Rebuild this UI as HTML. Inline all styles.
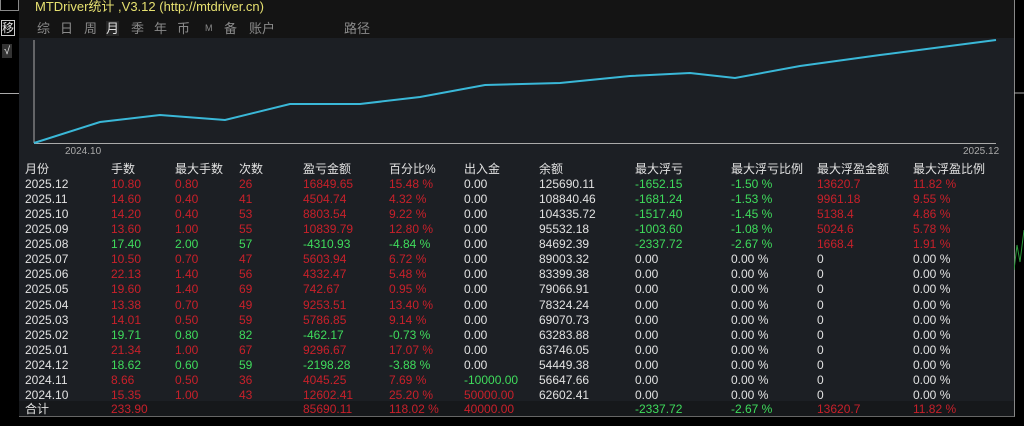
<!DOCTYPE html>
<html><head><meta charset="utf-8"><style>
body{margin:0;width:1024px;height:426px;background:#000;overflow:hidden;position:relative;font-family:"Liberation Sans","Noto Sans CJK SC",sans-serif;}
.p{position:absolute;left:19px;top:0;width:995px;height:416px;background:#1c1f24;border-right:1px solid #888;border-bottom:1px solid #666;}
.tb{position:absolute;left:0;top:0;width:995px;height:38px;background:#141414;}
.t{position:absolute;font-size:12px;white-space:nowrap;line-height:14px;}
.w{color:#e2e2e2}.r{color:#c8202a}.g{color:#3fdc5c}.y{color:#e6e070}.gr{color:#8a8a8a}
.row{position:absolute;left:0;width:995px;height:15px}
.tab{position:absolute;top:21px;font-size:13px;color:#8a8a8a;line-height:15px}
</style></head><body>
<div style="position:absolute;left:0;top:0;width:17px;height:10px;border:1px solid #888;border-top:none"></div>
<div class="t w" style="left:1px;top:20px;border:1px solid #ccc;font-size:12px;line-height:14px">移</div>
<div class="t w" style="left:2px;top:44px;background:#333;padding:0 2px;font-size:11px">√</div>
<div style="position:absolute;left:0;top:93px;width:19px;height:1px;background:#aaa"></div>
<div class="p">
<div class="tb"></div>
<div class="t y" style="left:16px;top:0px;font-size:13px">MTDriver统计 ,V3.12 (http://mtdriver.cn)</div>
<div class="tab" style="left:18px">综</div>
<div class="tab" style="left:41px">日</div>
<div class="tab" style="left:65px">周</div>
<div class="tab" style="left:87px;color:#ddd;background:#262626">月</div>
<div class="tab" style="left:112px">季</div>
<div class="tab" style="left:135px">年</div>
<div class="tab" style="left:158px">币</div>
<div class="tab" style="left:186px;font-size:9px">M</div>
<div class="tab" style="left:205px">备</div>
<div class="tab" style="left:230px">账户</div>
<div class="tab" style="left:325px">路径</div>
<svg style="position:absolute;left:0;top:0" width="995" height="160">
<line x1="15" y1="40" x2="15" y2="143" stroke="#aaa" stroke-width="1"/>
<line x1="15" y1="143.5" x2="977" y2="143.5" stroke="#aaa" stroke-width="1"/>
<polyline fill="none" stroke="#3ab8d8" stroke-width="2" points="15,143 81,122 141,115 206,120 271,104 341,104 401,97 466,85 541,83 611,76 671,73 716,78 781,66 861,55 977,40"/>
</svg>
<div class="t" style="left:46px;top:145px;font-size:10px;color:#aaa">2024.10</div>
<div class="t" style="left:944px;top:145px;font-size:10px;color:#aaa">2025.12</div>
<div class="row" style="top:162px">
<div class="t w" style="left:6px">月份</div><div class="t w" style="left:92px">手数</div><div class="t w" style="left:156px">最大手数</div><div class="t w" style="left:220px">次数</div><div class="t w" style="left:284px">盈亏金额</div><div class="t w" style="left:370px">百分比%</div><div class="t w" style="left:445px">出入金</div><div class="t w" style="left:520px">余额</div><div class="t w" style="left:616px">最大浮亏</div><div class="t w" style="left:712px">最大浮亏比例</div><div class="t w" style="left:798px">最大浮盈金额</div><div class="t w" style="left:894px">最大浮盈比例</div>
</div>
<div id="rows"></div>
<div class="row" style="top:401px;background:#16181b">
<div class="t w" style="left:6px;top:1px">合计</div><div class="t r" style="left:92px;top:1px">233.90</div><div class="t r" style="left:284px;top:1px">85690.11</div><div class="t r" style="left:370px;top:1px">118.02 %</div><div class="t r" style="left:445px;top:1px">40000.00</div><div class="t g" style="left:616px;top:1px">-2337.72</div><div class="t g" style="left:712px;top:1px">-2.67 %</div><div class="t r" style="left:798px;top:1px">13620.7</div><div class="t r" style="left:894px;top:1px">11.82 %</div>
</div>
</div>
<svg style="position:absolute;left:1014px;top:0" width="10" height="426"><line x1="0" y1="93" x2="10" y2="93" stroke="#aaa"/><polyline fill="none" stroke="#2c9a3c" points="0,270 3,245 6,262 10,230"/></svg>
<script>
var d=[
["2025.12","10.80","0.80","26","16849.65","15.48 %","0.00","125690.11","-1652.15","-1.50 %","13620.7","11.82 %",1],
["2025.11","14.60","0.40","41","4504.74","4.32 %","0.00","108840.46","-1681.24","-1.53 %","9961.18","9.55 %",1],
["2025.10","14.20","0.40","53","8803.54","9.22 %","0.00","104335.72","-1517.40","-1.45 %","5138.4","4.86 %",1],
["2025.09","13.60","1.00","55","10839.79","12.80 %","0.00","95532.18","-1003.60","-1.08 %","5024.6","5.78 %",1],
["2025.08","17.40","2.00","57","-4310.93","-4.84 %","0.00","84692.39","-2337.72","-2.67 %","1668.4","1.91 %",0],
["2025.07","10.50","0.70","47","5603.94","6.72 %","0.00","89003.32","0.00","0.00 %","0","0.00 %",1],
["2025.06","22.13","1.40","56","4332.47","5.48 %","0.00","83399.38","0.00","0.00 %","0","0.00 %",1],
["2025.05","19.60","1.40","69","742.67","0.95 %","0.00","79066.91","0.00","0.00 %","0","0.00 %",1],
["2025.04","13.38","0.70","49","9253.51","13.40 %","0.00","78324.24","0.00","0.00 %","0","0.00 %",1],
["2025.03","14.01","0.50","59","5786.85","9.14 %","0.00","69070.73","0.00","0.00 %","0","0.00 %",1],
["2025.02","19.71","0.80","82","-462.17","-0.73 %","0.00","63283.88","0.00","0.00 %","0","0.00 %",0],
["2025.01","21.34","1.00","67","9296.67","17.07 %","0.00","63746.05","0.00","0.00 %","0","0.00 %",1],
["2024.12","18.62","0.60","59","-2198.28","-3.88 %","0.00","54449.38","0.00","0.00 %","0","0.00 %",0],
["2024.11","8.66","0.50","36","4045.25","7.69 %","-10000.00","56647.66","0.00","0.00 %","0","0.00 %",1],
["2024.10","15.35","1.00","43","12602.41","25.20 %","50000.00","62602.41","0.00","0.00 %","0","0.00 %",1]];
var xs=[6,92,156,220,284,370,445,520,616,712,798,894],h="";
d.forEach(function(r,i){var c=r[12]?"r":"g";h+='<div class="row" style="top:'+(177+i*15.07)+'px">';
for(var j=0;j<12;j++){var k="w";if(j>=1&&j<=5)k=c;
if(j==6){k=r[6]=="0.00"?"w":(r[6][0]=="-"?"g":"r");}
if(j==8||j==9)k=r[8]=="0.00"?"w":"g";if(j==10||j==11)k=r[10]=="0"?"w":"r";
h+='<div class="t '+k+'" style="left:'+xs[j]+'px">'+r[j]+'</div>';}h+='</div>';});
document.getElementById("rows").innerHTML=h;
</script>
</body></html>
